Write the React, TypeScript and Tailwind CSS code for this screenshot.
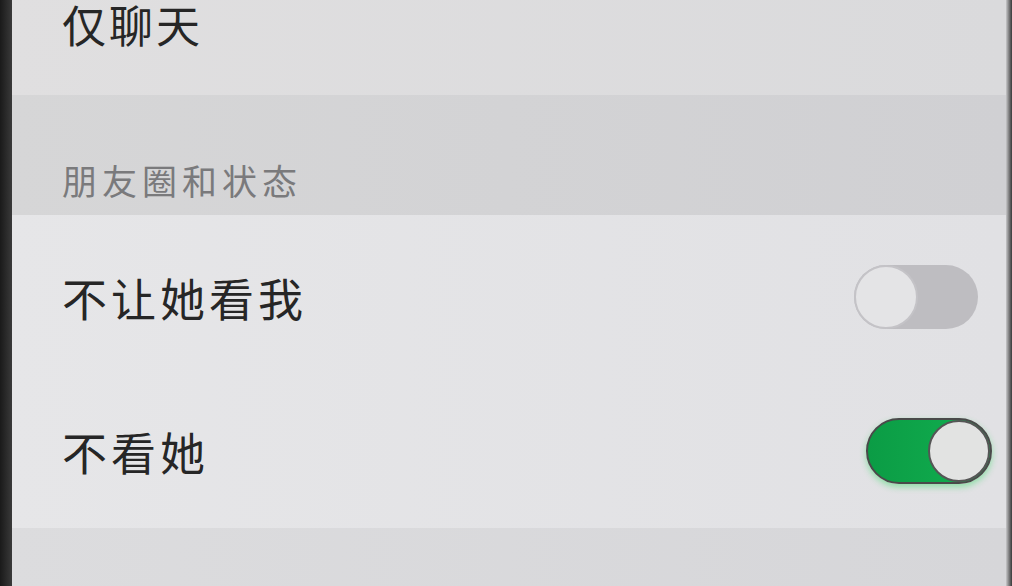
const font = { fontFamily: '"Noto Sans CJK SC", "Noto Sans", sans-serif' }

const Toggle = ({ on, className }: { on: boolean; className: string }) => {
    if (on) {
        return (
            <div className={`flex items-center justify-end rounded-full bg-linear-to-r from-[#0b9c45] to-[#12b050] border-2 border-[#4a4a4a] shadow-[0_3px_6px_rgba(40,220,90,0.45)] ${className}`}>
                <div className="h-full aspect-square rounded-full bg-[#e2e3e2] border-2 border-[#555]" />
            </div>
        )
    }
    return (
        <div className={`flex items-center justify-start rounded-full bg-[#bebdc1] ${className}`}>
            <div className="h-full aspect-square rounded-full bg-[#e4e4e6] border-2 border-[#c4c3c7]" />
        </div>
    )
}

const Row = ({ label, children }: { label: string; children: React.ReactNode }) => (
    <div className="flex items-center justify-between h-[154px] pl-[50px]">
        <span className="text-[45px] leading-none tracking-[4px] text-[#262626]" style={font}>{label}</span>
        {children}
    </div>
)

export default function App() {
    return (
        <div className="flex w-[1012px] h-[586px] overflow-hidden bg-[#222]">
            <div className="w-[12px] bg-linear-to-r from-[#1a1a1a] to-[#3a3a3a]" />
            <div className="flex flex-col flex-1">
                <div className="h-[95px] pl-[50px] pt-[2px] bg-linear-to-r from-[#e0dfe0] to-[#dadadc]">
                    <span className="block text-[44px] leading-[44px] tracking-[3px] text-[#262626]" style={font}>仅聊天</span>
                </div>
                <div className="flex items-end h-[120px] pl-[50px] pb-[18px] bg-linear-to-r from-[#d6d6d7] to-[#d0d0d3]">
                    <span className="text-[35px] leading-none tracking-[5px] text-[#7a7a7c]" style={font}>朋友圈和状态</span>
                </div>
                <div className="pt-[5px] bg-linear-to-r from-[#e6e6e8] to-[#e1e1e4]">
                    <Row label="不让她看我">
                        <Toggle on={false} className="w-[124px] h-[64px] mr-[28px]" />
                    </Row>
                    <Row label="不看她">
                        <Toggle on className="w-[126px] h-[66px] mr-[14px]" />
                    </Row>
                </div>
                <div className="flex-1 bg-linear-to-r from-[#dcdcde] to-[#d6d6d9]" />
            </div>
            <div className="w-[6px] bg-linear-to-r from-[#c8c8ca] to-[#3a3a3a]" />
        </div>
    )
}
